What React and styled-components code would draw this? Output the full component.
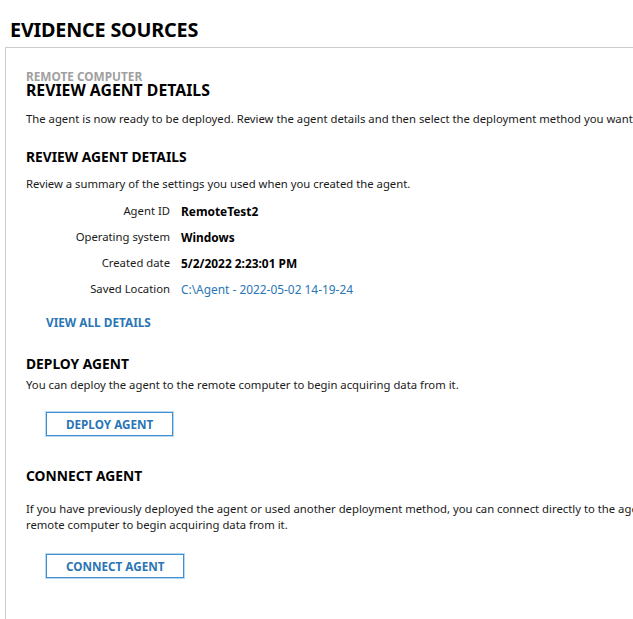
import React from 'react';
import styled, { createGlobalStyle } from 'styled-components';

const GlobalStyle = createGlobalStyle`
    html, body {
        margin: 0;
        padding: 0;
        background: #fff;
        overflow: hidden;
    }
    body {
        font-family: "Noto Sans", "Open Sans", sans-serif;
        color: #1a1a1a;
    }
`;

const details = [
    { label: 'Agent ID', value: 'RemoteTest2' },
    { label: 'Operating system', value: 'Windows' },
    { label: 'Created date', value: '5/2/2022 2:23:01 PM' },
    { label: 'Saved Location', value: 'C:\\Agent - 2022-05-02 14-19-24', link: true },
];

const App = () => {
    return (
        <Page>
            <GlobalStyle />
            <Title>EVIDENCE SOURCES</Title>
            <Panel>
                <Crumb>REMOTE COMPUTER</Crumb>
                <PageHeading>REVIEW AGENT DETAILS</PageHeading>
                <Text $top={13}>
                    The agent is now ready to be deployed. Review the agent details and then select the deployment method you want to use.
                </Text>

                <Heading $top={22}>REVIEW AGENT DETAILS</Heading>
                <Text $top={11}>Review a summary of the settings you used when you created the agent.</Text>
                <DetailGrid>
                    {details.map((d) => (
                        <React.Fragment key={d.label}>
                            <Label>{d.label}</Label>
                            <Value $link={d.link}>{d.value}</Value>
                        </React.Fragment>
                    ))}
                </DetailGrid>
                <LinkButton>VIEW ALL DETAILS</LinkButton>

                <Heading $top={26}>DEPLOY AGENT</Heading>
                <Text $top={5}>You can deploy the agent to the remote computer to begin acquiring data from it.</Text>
                <OutlineButton $top={19}>DEPLOY AGENT</OutlineButton>

                <Heading $top={32}>CONNECT AGENT</Heading>
                <Text $top={17}>
                    If you have previously deployed the agent or used another deployment method, you can connect directly to the agent on the remote computer to begin acquiring data from it.
                </Text>
                <OutlineButton $top={21}>CONNECT AGENT</OutlineButton>
            </Panel>
        </Page>
    );
};

//Styled Components
const Page = styled.div`
    width: 633px;
    height: 619px;
    display: flex;
    flex-direction: column;
    overflow: hidden;
`;

const Title = styled.h1`
    margin: 0;
    padding: 17px 0 0 10px;
    height: 47px;
    box-sizing: border-box;
    font-size: 19.8px;
    font-weight: 700;
    line-height: 26px;
    color: #000;
    letter-spacing: -0.2px;
`;

const Panel = styled.div`
    flex: 1;
    margin-left: 5px;
    width: 760px;
    border-top: 1px solid #cccccc;
    border-left: 1px solid #cccccc;
    padding: 22px 0 0 20px;
    box-sizing: border-box;
`;

const Crumb = styled.div`
    font-size: 11.8px;
    font-weight: 700;
    line-height: 12px;
    color: #a0a0a0;
`;

const PageHeading = styled.h2`
    margin: 0;
    font-size: 15.8px;
    font-weight: 700;
    line-height: 16px;
    color: #000;
`;

const Heading = styled.h3`
    margin: ${(p) => p.$top}px 0 0;
    font-size: 13.8px;
    font-weight: 700;
    line-height: 16px;
    color: #000;
`;

const Text = styled.p`
    margin: ${(p) => p.$top}px 0 0;
    width: 670px;
    font-size: 11.3px;
    line-height: 16px;
    color: #1a1a1a;
`;

const DetailGrid = styled.div`
    display: grid;
    grid-template-columns: 144px auto;
    column-gap: 11px;
    row-gap: 10px;
    margin-top: 11px;
    line-height: 16px;
`;

const Label = styled.div`
    text-align: right;
    font-size: 11.3px;
    color: #1a1a1a;
`;

const Value = styled.div`
    font-size: 11.9px;
    font-weight: ${(p) => (p.$link ? 400 : 700)};
    color: ${(p) => (p.$link ? '#2a76b5' : '#000')};
`;

const LinkButton = styled.div`
    margin: 17px 0 0 20px;
    font-size: 11.8px;
    font-weight: 700;
    line-height: 16px;
    color: #2a76b5;
`;

const OutlineButton = styled.button`
    display: flex;
    align-items: center;
    justify-content: center;
    margin: ${(p) => p.$top}px 0 0 20px;
    height: 24px;
    padding: 0 19px;
    background: #fff;
    border: 1px solid #3f8fd2;
    box-shadow: 0 0 0 1px #b9d7f0;
    font-family: inherit;
    font-size: 11.7px;
    font-weight: 700;
    color: #2a76b5;
    cursor: pointer;
`;

export default App;
